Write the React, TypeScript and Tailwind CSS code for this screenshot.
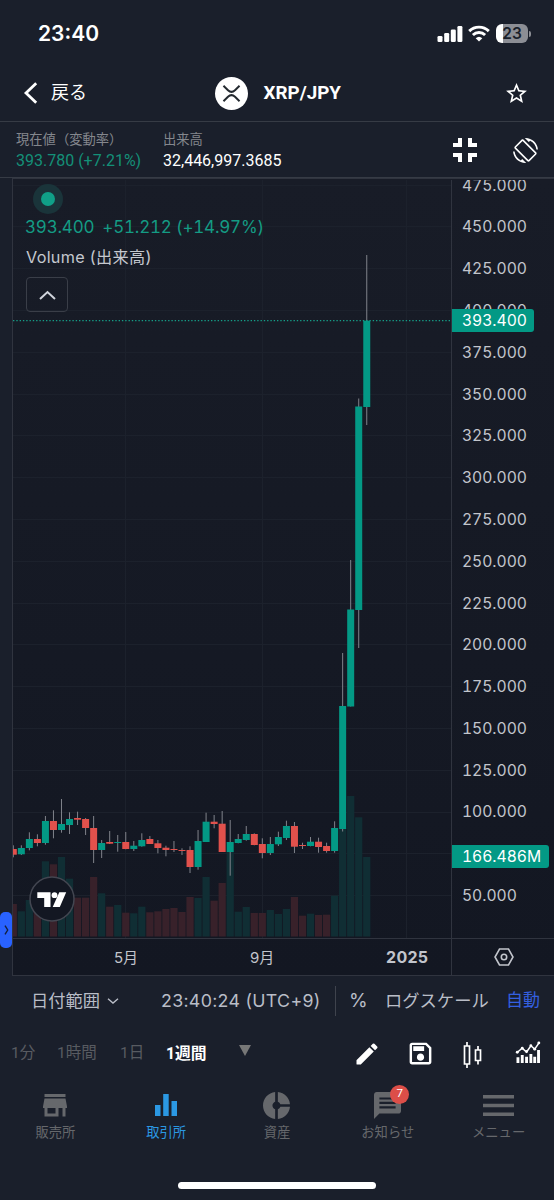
import type { ReactNode } from 'react';

type Candle = [number, number, number, number, number, number];

// high, body top, body bottom, low, up (1) / down (0), volume top
const candles: Candle[] = [
    [845.3, 849, 854.7, 857.3, 0, 904],
    [845.3, 848, 854.3, 855, 1, 911.3],
    [832.3, 839, 848, 850.3, 1, 900],
    [834.3, 839, 843, 846.3, 0, 890],
    [816, 821, 843, 844.7, 1, 861.3],
    [810.3, 821, 830, 838.3, 0, 864.3],
    [799, 824, 830, 832.7, 1, 857],
    [812.3, 819, 825, 834, 1, 878.7],
    [811.7, 818, 819.7, 825, 0, 897.7],
    [818, 819, 828, 835, 0, 897.7],
    [816, 828, 850, 863, 0, 877],
    [840, 843, 850, 858, 1, 893.3],
    [831, 842, 843.7, 844, 0, 906.7],
    [835, 842, 842.8, 851.7, 1, 905],
    [832, 842, 849, 849.3, 0, 912.7],
    [841, 845.7, 849, 851, 1, 913.3],
    [833.3, 840, 846.3, 846.7, 1, 906.7],
    [836, 839, 844, 844, 0, 912.3],
    [840, 843.3, 848, 853.3, 0, 911.3],
    [845.7, 847.7, 850, 856.3, 0, 909],
    [841, 849, 850, 852, 0, 908],
    [848.3, 850, 851, 855, 0, 912],
    [846.3, 850, 867, 873, 0, 897],
    [830, 841, 867, 869.7, 1, 898],
    [812.7, 821.7, 842, 842, 1, 877],
    [815, 821.7, 824, 828.3, 0, 900.7],
    [811, 823.7, 852, 852, 0, 883],
    [820, 842, 852, 875.7, 1, 851.3],
    [834, 839, 843, 843.3, 1, 911.7],
    [826, 834, 840, 840.7, 1, 907],
    [833.3, 834, 845, 845.3, 0, 913],
    [838.3, 844, 853, 858.3, 0, 913],
    [837, 844, 853, 855, 1, 910],
    [831.7, 837, 844.3, 846, 1, 914],
    [820.7, 826, 838, 840, 1, 909],
    [822, 826, 846.7, 853, 0, 897],
    [842.7, 845, 846, 849, 0, 915.7],
    [837, 841.7, 846, 846.3, 1, 913.7],
    [837.7, 841.7, 847, 852.7, 0, 915],
    [842.7, 846, 851, 852.7, 0, 914.7],
    [821.3, 828, 851, 852.7, 1, 895.7],
    [653, 706, 829, 831.5, 1, 828],
    [560, 609.5, 706.5, 706.5, 1, 796],
    [398.5, 406.5, 610, 648, 1, 817.3],
    [255, 320.7, 407, 425, 1, 857],
];

const STEP = 8.033;
const FIRST_X = 13.3;
const PRICE_TOP = 184.6;
const PRICE_STEP = 41.8;
const prices = Array.from({ length: 18 }, (_, i) => 475 - i * 25);

function Chart() {
    return (
        <svg width="438" height="758" viewBox="13 180 438 758" className="block">
            {prices.map((price, i) => (
                <path
                    key={price}
                    d={`M13 ${Math.round(PRICE_TOP + i * PRICE_STEP) + 0.5}H451`}
                    stroke="#1c212c"
                />
            ))}
            {[125.5, 262.5, 406.5].map((x) => (
                <path key={x} d={`M${x} 180V938`} stroke="#1c212c" />
            ))}
            {candles.map(([, , , , up, volume], i) => (
                <rect
                    key={i}
                    x={FIRST_X + i * STEP - 3.6}
                    y={volume}
                    width="7.2"
                    height={936.5 - volume}
                    fill={up ? '#102e34' : '#38212a'}
                />
            ))}
            {candles.map(([high, top, bottom, low, up], i) => {
                const x = FIRST_X + i * STEP;
                return (
                    <g key={i}>
                        <path d={`M${x} ${high}V${low}`} stroke="#80838b" />
                        <rect
                            x={x - 3.5}
                            y={top}
                            width="7"
                            height={Math.max(bottom - top, 1)}
                            fill={up ? '#039985' : '#e2514c'}
                        />
                    </g>
                );
            })}
            <path d="M13 320.6H451" stroke="#159c86" strokeWidth="1.2" strokeDasharray="1.4 1.9" />
        </svg>
    );
}

function PriceAxis() {
    return (
        <div className="relative w-[102px] shrink-0 overflow-hidden border-l border-[#30343f] text-[15.7px] tracking-[-0.05px] text-[#c2c5cc] tabular-nums">
            <div className="-mt-[15.6px]">
                {prices.map((price) => (
                    <div key={price} className="flex h-[41.8px] items-center pl-[10px]">
                        {/* 75 sits entirely under the volume tag */}
                        {price !== 75 && price.toFixed(3)}
                    </div>
                ))}
            </div>
            <div className="absolute top-[129px] left-[-1px] flex h-[23px] w-[83px] items-center rounded-r-[3px] bg-[#039985] pt-px pl-[11px] text-white">
                393.400
            </div>
            <div className="absolute top-[665px] left-[-1px] flex h-[23px] w-[98px] items-center rounded-r-[3px] bg-[#039985] pt-px pl-[11px] text-white">
                166.486M
            </div>
        </div>
    );
}

function StatusBar() {
    return (
        <div className="flex h-[64px] items-center justify-between pt-[3px] pr-[23px] pl-[38px]">
            <span className="font-['Inter'] text-[21px] font-semibold text-white">23:40</span>
            <div className="flex items-center gap-[6px]">
                <svg width="26" height="17" viewBox="0 0 26 17" fill="#fff">
                    <rect x="0.5" y="11" width="5" height="6" rx="1.3" />
                    <rect x="7.2" y="8" width="5" height="9" rx="1.3" />
                    <rect x="13.8" y="4.5" width="5" height="12.5" rx="1.3" />
                    <rect x="20.4" y="1" width="5" height="16" rx="1.3" />
                </svg>
                <svg className="-ml-px" width="22" height="17" viewBox="0 0 22 17" fill="none" stroke="#fff" strokeWidth="2.9">
                    <path d="M1.2 6.1a14 14 0 0 1 19.6 0" />
                    <path d="M4.9 10a8.7 8.7 0 0 1 12.2 0" />
                    <path d="M11 16.6 7.7 13.2a4.8 4.8 0 0 1 6.6 0z" fill="#fff" stroke="none" />
                </svg>
                <div className="flex items-center gap-px">
                    <div className="flex h-[19px] w-[32px] items-center justify-center rounded-[6px] bg-linear-to-r from-white from-23% to-[#8c8e95] to-23% font-['Inter'] text-[15.5px] font-semibold text-[#1a1f2b]">
                        23
                    </div>
                    <div className="h-[6px] w-[2px] rounded-r-full bg-[#8c8e95]" />
                </div>
            </div>
        </div>
    );
}

function Header() {
    return (
        <header className="grid h-[58px] grid-cols-[1fr_auto_1fr] items-center border-b border-[#363b45] pr-[25px] pl-[23px] text-white">
            <div className="flex items-center gap-[13px] text-[18px]">
                <svg width="15" height="22" viewBox="0 0 15 22" fill="none" stroke="#fff" strokeWidth="2.8">
                    <path d="M13.2 1.2 3 11l10.2 9.8" />
                </svg>
                戻る
            </div>
            <div className="flex items-center gap-[15.5px] pt-px pl-[4px]">
                <svg width="33" height="33" viewBox="0 0 32 32">
                    <circle cx="16" cy="16" r="16" fill="#fff" />
                    <path
                        d="M8.2 8.5 12.6 12.8Q16 16 19.4 12.8L23.8 8.5M8.2 23.5 12.6 19.2Q16 16 19.4 19.2L23.8 23.5"
                        fill="none"
                        stroke="#23292f"
                        strokeWidth="1.9"
                    />
                </svg>
                <h1 className="text-[18.8px] font-bold">XRP/JPY</h1>
            </div>
            <svg className="mt-[2px] justify-self-end" width="25" height="25" viewBox="0 0 24 24" fill="#fff">
                <path d="m22 9.24-7.19-.62L12 2 9.19 8.63 2 9.24l5.46 4.73L5.82 21 12 17.27 18.18 21l-1.63-7.03zM12 15.4l-3.76 2.27 1-4.28-3.32-2.88 4.38-.38L12 6.1l1.71 4.04 4.38.38-3.32 2.88 1 4.28z" />
            </svg>
        </header>
    );
}

function Ticker() {
    return (
        <div className="flex h-[56px] items-center border-b border-[#363b45] pr-[16px] pl-[16px] text-[16px] leading-[21px] text-white">
            <div className="w-[147px]">
                <div className="text-[13.3px] text-[#84878d]">現在値（変動率）</div>
                <div className="text-[#149078]">393.780 (+7.21%)</div>
            </div>
            <div className="flex-1">
                <div className="text-[13.3px] text-[#84878d]">出来高</div>
                <div>32,446,997.3685</div>
            </div>
            <svg className="mr-[35px]" width="26" height="26" viewBox="0 0 26 26" fill="none" stroke="#fff" strokeWidth="4">
                <path d="M8 1v7H1M18 1v7h7M8 25v-7H1M18 25v-7h7" />
            </svg>
            <svg className="mt-px" width="25" height="25" viewBox="0 0 24 24" fill="#fff">
                <path d="M16.48 2.52c3.27 1.55 5.61 4.72 5.97 8.48h1.5C23.44 4.84 18.29 0 12 0l-.66.03 3.81 3.81 1.33-1.32zm-6.25-.77c-.59-.59-1.54-.59-2.12 0L1.75 8.11c-.59.59-.59 1.54 0 2.12l12.02 12.02c.59.59 1.54.59 2.12 0l6.36-6.36c.59-.59.59-1.54 0-2.12L10.23 1.75zm4.6 19.44L2.81 9.17l6.36-6.36 12.02 12.02-6.36 6.36zm-7.31.29C4.25 19.94 1.91 16.76 1.55 13H.05C.56 19.16 5.71 24 12 24l.66-.03-3.81-3.81-1.33 1.32z" />
            </svg>
        </div>
    );
}

function ChartPanel() {
    return (
        <section className="flex h-[798px] font-['Inter','Noto_Sans_CJK_JP',sans-serif]">
            <div className="flex w-[12px] shrink-0 items-end pb-[28px]">
                <button className="flex h-[36px] w-[12px] items-center justify-center rounded-[5px] bg-[#2962ff]">
                    <svg width="5" height="10" viewBox="0 0 5 10" fill="none" stroke="#14203f" strokeWidth="1.4">
                        <path d="m1 .7 2.7 4.3L1 9.3" />
                    </svg>
                </button>
            </div>
            <div className="flex-1 border-y border-l border-[#30343f] bg-linear-to-b from-[#181c27] to-[#131722]">
                <div className="flex h-[760px] border-b border-[#30343f] pt-px">
                    <div className="relative w-[438px] shrink-0">
                        <Chart />
                        <div className="absolute top-[4px] left-[12px]">
                            <div className="ml-[8px] flex size-[30px] items-center justify-center rounded-full bg-[#1a343a]">
                                <div className="size-[14px] rounded-full bg-[#10a088]" />
                            </div>
                            <div className="flex h-[27px] items-center gap-[8px] pt-px text-[17px] tracking-[-0.2px] text-[#149b84] tabular-nums">
                                <span>393.400</span>
                                <span>+51.212 (+14.97%)</span>
                            </div>
                            <div className="flex h-[33px] items-center pl-px text-[16.2px] tracking-[0.3px] text-[#c5c8cf]">
                                Volume (出来高)
                            </div>
                            <button className="mt-[3px] ml-px flex h-[35px] w-[42px] items-center justify-center rounded-[4px] border border-[#3a3e48]">
                                <svg width="17" height="10" viewBox="0 0 17 10" fill="none" stroke="#d1d4dc" strokeWidth="2">
                                    <path d="m1 9 7.5-7L16 9" />
                                </svg>
                            </button>
                        </div>
                        <svg className="absolute top-[696px] left-[16px]" width="46" height="46" viewBox="0 0 46 46">
                            <circle cx="23" cy="23" r="22" fill="#131722" stroke="#434651" strokeWidth="1.5" />
                            <path d="M8.3 16.2h13.2v14.9h-6.3v-9H8.3zM30.3 16.2h6.9l-6.4 14.9h-7.1z" fill="#fff" />
                            <circle cx="25.5" cy="19.2" r="2.9" fill="#fff" />
                        </svg>
                    </div>
                    <PriceAxis />
                </div>
                <div className="grid h-[36px] grid-cols-[226px_46px_166px_102px] items-center text-[15px] text-[#c2c5cc]">
                    <span className="pt-[2px] pl-[101px]">5月</span>
                    <span className="pt-[2px] pl-[11px]">9月</span>
                    <span className="pl-[101px] text-[16px] font-bold tracking-[0.3px]">2025</span>
                    <div className="flex h-full items-center justify-center border-l border-[#30343f] pl-[2px]">
                        <svg width="20" height="18" viewBox="0 0 20 18" fill="none" stroke="#c2c5cc" strokeWidth="1.6">
                            <path d="M5.5 1h9L19 9l-4.5 8h-9L1 9z" />
                            <circle cx="10" cy="9" r="2.7" />
                        </svg>
                    </div>
                </div>
            </div>
        </section>
    );
}

function ChartOptions() {
    return (
        <div className="flex h-[49px] items-center pt-px pl-[31px] font-['Inter','Noto_Sans_CJK_JP',sans-serif] text-[17.3px] whitespace-nowrap text-[#b9bdc7]">
            <span className="w-[76px]">日付範囲</span>
            <svg className="mr-[42px]" width="12" height="6" viewBox="0 0 12 6" fill="none" stroke="#b9bdc7" strokeWidth="1.4">
                <path d="m1 .7 5 4.3 5-4.3" />
            </svg>
            <span className="w-[174px] text-[17.8px] tracking-[0.3px]">23:40:24 (UTC+9)</span>
            <div className="h-[30px] w-px bg-[#3f434d]" />
            <span className="ml-[13px] w-[36px] text-[19px]">%</span>
            <span className="w-[121px]">ログスケール</span>
            <span className="text-[17px] text-[#3460e0]">自動</span>
        </div>
    );
}

function Toolbar() {
    return (
        <div className="flex h-[56px] items-center pt-px pr-[13px] pl-[11px] text-[15.5px] text-[#585b61]">
            <span className="w-[46px]">1分</span>
            <span className="w-[63px]">1時間</span>
            <span className="w-[46px]">1日</span>
            <span className="w-[73px] text-[15.8px] font-bold text-white">1週間</span>
            <svg className="mb-[7px]" width="12" height="11" viewBox="0 0 12 11" fill="#777">
                <path d="M0 0h12L6 11z" />
            </svg>
            <div className="ml-auto flex items-center">
                <svg className="mr-[25px]" width="28" height="28" viewBox="0 0 24 24" fill="#fff">
                    <path d="M3 17.46v3.04c0 .28.22.5.5.5h3.04c.13 0 .26-.05.35-.15L17.81 9.94l-3.75-3.75L3.15 17.1c-.1.1-.15.22-.15.36zM20.71 7.04a1 1 0 0 0 0-1.41l-2.34-2.34a1 1 0 0 0-1.41 0l-1.83 1.83 3.75 3.75z" />
                </svg>
                <svg className="mr-[28px]" width="29" height="29" viewBox="0 0 24 24" fill="#fff">
                    <path d="M17 3H5c-1.11 0-2 .9-2 2v14c0 1.1.89 2 2 2h14c1.1 0 2-.9 2-2V7zm2 16H5V5h11.17L19 7.83zm-7-7c-1.66 0-3 1.34-3 3s1.34 3 3 3 3-1.34 3-3-1.34-3-3-3M6 6h9v4H6z" />
                </svg>
                <svg className="mt-[3px] mr-[32px]" width="20" height="28" viewBox="0 0 20 28" fill="none" stroke="#fff" strokeWidth="1.7">
                    <path d="M1.5 5h5v18h-5zM4 1v4M4 23v4M12.5 9h5v10.5h-5zM15 5v4M15 19.5v4" />
                </svg>
                <svg className="mb-[2px]" width="26" height="23" viewBox="0 0 26 24" fill="none" stroke="#fff">
                    <path d="M2.5 17v6M7 14.5V23M11.5 16.5V23M16 13.5V23M20 16.5V23M24 9.5V23" strokeWidth="3" />
                    <path d="M1.5 12 7 7.5l4.5 4L16 5l4 3.5 4.5-6.5" strokeWidth="1.6" />
                    <g fill="#fff" stroke="none">
                        <circle cx="1.8" cy="11.7" r="1.5" />
                        <circle cx="7" cy="7.5" r="1.5" />
                        <circle cx="11.5" cy="11" r="1.5" />
                        <circle cx="16" cy="5" r="1.5" />
                        <circle cx="20" cy="8.5" r="1.5" />
                        <circle cx="24.3" cy="2" r="1.5" />
                    </g>
                </svg>
            </div>
        </div>
    );
}

function NavItem({ label, active, children }: { label: string; active?: boolean; children: ReactNode }) {
    return (
        <a className={`flex flex-col items-center text-[13.3px] ${active ? 'text-[#2b98e3]' : 'text-[#66686c]'}`}>
            <div className="flex h-[34px] items-center">{children}</div>
            <span className="mt-px leading-[20px]">{label}</span>
        </a>
    );
}

function TabBar() {
    return (
        <nav className="grid h-[100px] grid-cols-5 pt-[7px]">
            <NavItem label="販売所">
                <svg width="24" height="23" viewBox="0 0 24 23" fill="#66686c">
                    <path d="M1.5 0h21v3h-21zM1.5 4.5h21l1.5 8V14h-1.5v8.5h-3V14h-4v8.5h-14V14H0v-1.5zM4.5 14v5.5h8V14z" fillRule="evenodd" />
                </svg>
            </NavItem>
            <NavItem label="取引所" active>
                <svg width="22" height="22" viewBox="0 0 22 22" fill="#2b98e3">
                    <path d="M0 11h5.5v11H0zM8.2 0h5.5v22H8.2zM16.5 7H22v15h-5.5z" />
                </svg>
            </NavItem>
            <NavItem label="資産">
                <svg width="27" height="27" viewBox="2 2 20 20" fill="#66686c">
                    <path d="M11 9.16V2c-5 .5-9 4.79-9 10s4 9.5 9 10v-7.16c-1-.41-2-1.52-2-2.84s1-2.43 2-2.84M14.86 11H22c-.48-4.75-4-8.53-9-9v7.16c1 .3 1.52.98 1.86 1.84M13 14.84V22c5-.47 8.52-4.25 9-9h-7.14c-.34.86-.86 1.54-1.86 1.84" />
                </svg>
            </NavItem>
            <NavItem label="お知らせ">
                <div className="relative">
                    <svg width="27" height="27" viewBox="2 2 20 20" fill="#66686c">
                        <path
                            d="M20 2H4c-1.1 0-2 .9-2 2v18l4-4h14c1.1 0 2-.9 2-2V4c0-1.1-.9-2-2-2M6 6h12v1.6H6zm0 3.3h12v1.6H6zm0 3.3h12v1.6H6z"
                            fillRule="evenodd"
                        />
                    </svg>
                    <span className="absolute -top-[7px] left-[16px] flex size-[19px] items-center justify-center rounded-full bg-[#dc4e48] text-[11.5px] text-white">
                        7
                    </span>
                </div>
            </NavItem>
            <NavItem label="メニュー">
                <svg width="31" height="21" viewBox="0 0 31 21" fill="#66686c">
                    <path d="M0 0h31v3.5H0zM0 8.7h31v3.5H0zM0 17.4h31V21H0z" />
                </svg>
            </NavItem>
        </nav>
    );
}

function App() {
    return (
        <main className="h-[1200px] w-[554px] overflow-hidden bg-[#1a1f2b] font-['Roboto','Noto_Sans_CJK_JP',sans-serif]">
            <StatusBar />
            <Header />
            <Ticker />
            <ChartPanel />
            <ChartOptions />
            <Toolbar />
            <TabBar />
            <div className="mx-auto mt-px h-[7px] w-[198px] rounded-full bg-white" />
        </main>
    );
}

export default App;
